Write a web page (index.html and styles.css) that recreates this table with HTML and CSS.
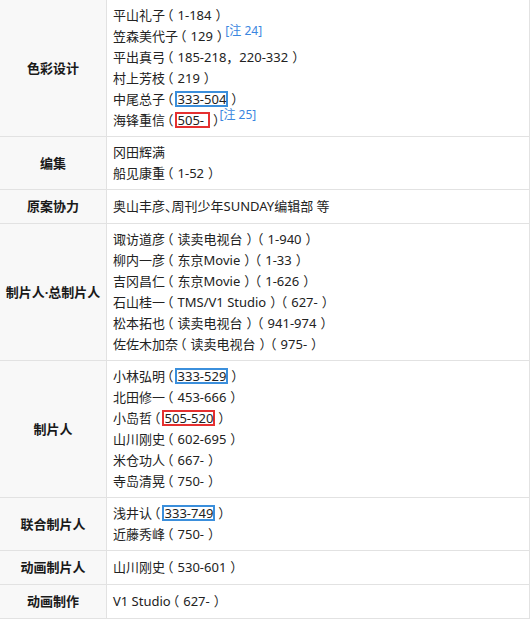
FILE: index.html
```html
<!DOCTYPE html>
<html lang="zh-CN">
<head>
<meta charset="utf-8">
<link rel="stylesheet" href="styles.css">
</head>
<body>
<table class="staff">
  <colgroup><col class="col-role"><col></colgroup>
  <tbody>
    <tr>
      <th>色彩设计</th>
      <td>
        <div class="line">平山礼子<span class="paren">（<span class="inner">1-184</span>）</span></div>
        <div class="line">笠森美代子<span class="paren">（<span class="inner">129</span>）</span><sup class="note">[注 24]</sup></div>
        <div class="line">平出真弓<span class="paren">（<span class="inner">185-218，220-332</span>）</span></div>
        <div class="line">村上芳枝<span class="paren">（<span class="inner">219</span>）</span></div>
        <div class="line">中尾总子<span class="paren">（<span class="mark blue">333-504</span>）</span></div>
        <div class="line">海锋重信<span class="paren tight">（<span class="mark red short">505-</span>）</span><sup class="note">[注 25]</sup></div>
      </td>
    </tr>
    <tr>
      <th>编集</th>
      <td>
        <div class="line">冈田辉满</div>
        <div class="line">船见康重<span class="paren">（<span class="inner">1-52</span>）</span></div>
      </td>
    </tr>
    <tr>
      <th>原案协力</th>
      <td><div class="line">奥山丰彦、周刊少年SUNDAY编辑部 等</div></td>
    </tr>
    <tr>
      <th>制片人·总制片人</th>
      <td>
        <div class="line">诹访道彦<span class="paren">（<span class="inner">读卖电视台</span>）</span><span class="paren">（<span class="inner">1-940</span>）</span></div>
        <div class="line">柳内一彦<span class="paren">（<span class="inner">东京Movie</span>）</span><span class="paren">（<span class="inner">1-33</span>）</span></div>
        <div class="line">吉冈昌仁<span class="paren">（<span class="inner">东京Movie</span>）</span><span class="paren">（<span class="inner">1-626</span>）</span></div>
        <div class="line">石山桂一<span class="paren">（<span class="inner">TMS/V1 Studio</span>）</span><span class="paren">（<span class="inner">627-</span>）</span></div>
        <div class="line">松本拓也<span class="paren">（<span class="inner">读卖电视台</span>）</span><span class="paren">（<span class="inner">941-974</span>）</span></div>
        <div class="line">佐佐木加奈<span class="paren">（<span class="inner">读卖电视台</span>）</span><span class="paren">（<span class="inner">975-</span>）</span></div>
      </td>
    </tr>
    <tr>
      <th>制片人</th>
      <td>
        <div class="line">小林弘明<span class="paren">（<span class="mark blue">333-529</span>）</span></div>
        <div class="line">北田修一<span class="paren">（<span class="inner">453-666</span>）</span></div>
        <div class="line">小岛哲<span class="paren">（<span class="mark red">505-520</span>）</span></div>
        <div class="line">山川刚史<span class="paren">（<span class="inner">602-695</span>）</span></div>
        <div class="line">米仓功人<span class="paren">（<span class="inner">667-</span>）</span></div>
        <div class="line">寺岛清晃<span class="paren">（<span class="inner">750-</span>）</span></div>
      </td>
    </tr>
    <tr>
      <th>联合制片人</th>
      <td>
        <div class="line">浅井认<span class="paren">（<span class="mark blue">333-749</span>）</span></div>
        <div class="line">近藤秀峰<span class="paren">（<span class="inner">750-</span>）</span></div>
      </td>
    </tr>
    <tr>
      <th>动画制片人</th>
      <td><div class="line">山川刚史<span class="paren">（<span class="inner">530-601</span>）</span></div></td>
    </tr>
    <tr>
      <th>动画制作</th>
      <td><div class="line">V1 Studio<span class="paren">（<span class="inner">627-</span>）</span></div></td>
    </tr>
  </tbody>
</table>
</body>
</html>
```

FILE: styles.css
```css
html, body {
  margin: 0;
  padding: 0;
  background: #ffffff;
}

body {
  font-family: "Noto Sans", "Noto Sans CJK SC", sans-serif;
  font-size: 13px;
  color: #222222;
  overflow: hidden;
}

.staff {
  border-collapse: collapse;
  table-layout: fixed;
  width: 531px;
  margin: -1px 0 0 -1px;
}

.col-role {
  width: 107px;
}

.staff th,
.staff td {
  border: 1px solid #e2e2e2;
  vertical-align: middle;
}

.staff th {
  background: #f8f8f8;
  color: #1a1a1a;
  font-weight: bold;
  text-align: center;
  line-height: 23px;
  padding: 5px 2px;
  white-space: nowrap;
}

.staff td {
  background: #ffffff;
  text-align: left;
  line-height: 21px;
  padding: 5px 6px;
  font-feature-settings: "halt";
}

.line {
  white-space: nowrap;
}

.paren {
  margin: 0 2px 0 2px;
}

.paren.tight {
  margin-right: 0;
}

.inner {
  font-feature-settings: normal;
  margin: 0 4px 0 4px;
}

.note {
  font-size: 12px;
  line-height: 0;
  vertical-align: 6px;
  color: #3a86e0;
  font-feature-settings: normal;
}

.mark {
  display: inline-block;
  line-height: 12px;
  padding: 0 0 0 1px;
  margin: 0 3px 0 1px;
  border: 2px solid;
  font-feature-settings: normal;
}

.mark.short {
  padding-right: 4px;
}

.mark.blue {
  border-color: #3b8fdc;
}

.mark.red {
  border-color: #e53030;
}
```
